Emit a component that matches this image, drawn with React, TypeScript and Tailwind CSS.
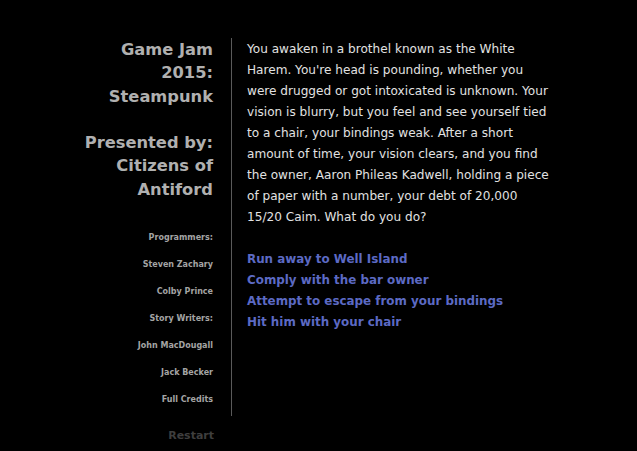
export default function App() {
  const credits = [
    "Programmers:",
    "Steven Zachary",
    "Colby Prince",
    "Story Writers:",
    "John MacDougall",
    "Jack Becker",
    "Full Credits",
  ];
  const choices = [
    "Run away to Well Island",
    "Comply with the bar owner",
    "Attempt to escape from your bindings",
    "Hit him with your chair",
  ];
  return (
    <div
      className="min-h-[451px] w-full bg-black"
      style={{ fontFamily: '"DejaVu Sans", Verdana, sans-serif' }}
    >
      <div className="flex pt-[38px]">
        <div className="w-[232px] shrink-0">
          <div className="border-r border-[#5a5a5a] pr-[18px] pb-[3px] text-right">
            <div className="text-[16.3px] font-bold leading-[23.3px] text-[#b0b0b0]">
              <div>Game Jam</div>
              <div>2015:</div>
              <div>Steampunk</div>
              <div className="mt-[23.3px]">Presented by:</div>
              <div>Citizens of</div>
              <div>Antiford</div>
            </div>
            <div className="mt-[23px] text-[8px] font-bold leading-[27px] text-[#a4a4a4]">
              {credits.map((c) => (
                <div key={c}>{c}</div>
              ))}
            </div>
          </div>
          <div className="pr-[18px] pt-[12px] text-right text-[11px] font-bold leading-[16px] text-[#3e3e3e]">
            Restart
          </div>
        </div>
        <div className="w-[320px] pl-[15px] pt-[1px]">
          <p className="text-[12.1px] leading-[21px] text-[#e2e2e2]">
            You awaken in a brothel known as the White Harem. You're head is
            pounding, whether you were drugged or got intoxicated is unknown.
            Your vision is blurry, but you feel and see yourself tied to a
            chair, your bindings weak. After a short amount of time, your
            vision clears, and you find the owner, Aaron Phileas Kadwell,
            holding a piece of paper with a number, your debt of 20,000 15/20
            Caim. What do you do?
          </p>
          <div className="mt-[21px] text-[11.9px] font-bold leading-[21px] text-[#5c6ac4]">
            {choices.map((c) => (
              <div key={c}>{c}</div>
            ))}
          </div>
        </div>
      </div>
    </div>
  );
}
